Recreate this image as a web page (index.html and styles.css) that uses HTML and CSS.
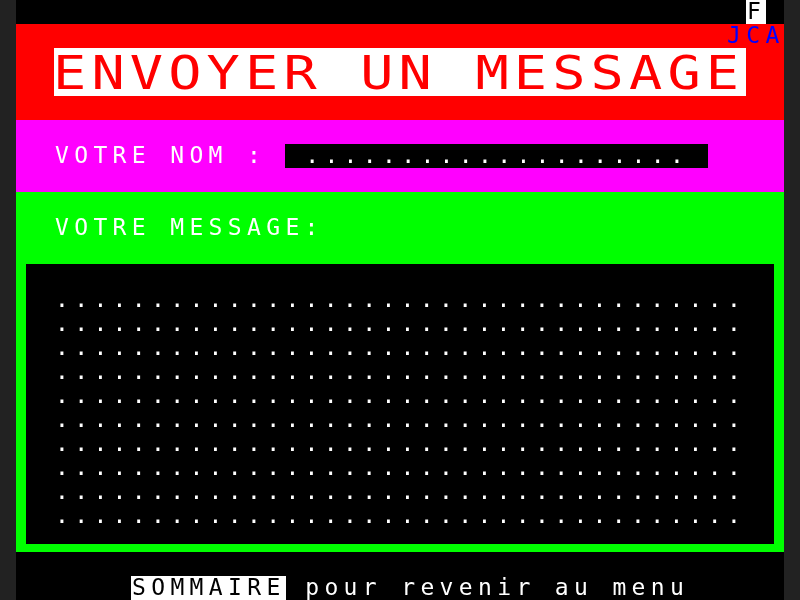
FILE: index.html
```html
<!DOCTYPE html>
<html lang="fr">
<head>
<meta charset="utf-8">
<title>Envoyer un message</title>
<link rel="stylesheet" href="styles.css">
</head>
<body>
<div class="screen">
  <div class="row status"><span class="t inv">F</span></div>
  <div class="band header">
    <div class="row right"><span class="t blue">JCA</span></div>
    <div class="title"><span class="title-text">ENVOYER UN MESSAGE</span></div>
  </div>
  <div class="band name">
    <div class="row indent"><span class="t">VOTRE NOM : </span><span class="t field"> .................... </span></div>
  </div>
  <div class="band msg">
    <div class="row indent"><span class="t">VOTRE MESSAGE:</span></div>
    <div class="box">
      <div class="row"><span class="t">....................................</span></div>
      <div class="row"><span class="t">....................................</span></div>
      <div class="row"><span class="t">....................................</span></div>
      <div class="row"><span class="t">....................................</span></div>
      <div class="row"><span class="t">....................................</span></div>
      <div class="row"><span class="t">....................................</span></div>
      <div class="row"><span class="t">....................................</span></div>
      <div class="row"><span class="t">....................................</span></div>
      <div class="row"><span class="t">....................................</span></div>
      <div class="row"><span class="t">....................................</span></div>
    </div>
  </div>
  <div class="footer">
    <div class="row"></div>
    <div class="row menu"><span class="t inv">SOMMAIRE</span><span class="t"> pour revenir au menu</span></div>
  </div>
</div>
</body>
</html>
```
FILE: styles.css
```css
html, body {
  margin: 0;
  padding: 0;
  height: 100%;
}
body {
  background: #222222;
  overflow: hidden;
}
.screen {
  width: 768px;
  height: 600px;
  margin: 0 auto;
  background: #000000;
  color: #ffffff;
  font-family: "DejaVu Sans Mono", "Liberation Mono", monospace;
  font-size: 23px;
  line-height: 22px;
  letter-spacing: 5.353px;
  -webkit-font-smoothing: antialiased;
}
.row {
  height: 24px;
  display: flex;
}
.t {
  white-space: pre;
  padding-left: 1px;
  margin-right: -1px;
  will-change: transform;
}
.inv {
  background: #ffffff;
  color: #000000;
}
.status {
  justify-content: flex-end;
  padding-right: 19.2px;
}
.right {
  justify-content: flex-end;
}
.blue {
  color: #0000ff;
}
.band {
  box-sizing: border-box;
}
.header {
  height: 96px;
  background: #ff0000;
}
.title {
  margin-left: 38.4px;
  width: 691.2px;
  height: 48px;
  background: #ffffff;
  color: #ff0000;
  font-size: 46px;
  line-height: 50px;
  white-space: pre;
}
.title-text {
  display: inline-block;
  letter-spacing: 4.306px;
  transform: scaleX(1.2);
  transform-origin: 0 0;
  margin-left: -1px;
}
.name {
  height: 72px;
  padding-top: 24px;
  background: #ff00ff;
}
.indent {
  padding-left: 38.4px;
}
.field {
  background: #000000;
}
.msg {
  height: 360px;
  padding-top: 24px;
  background: #00ff00;
}
.box {
  margin: 24px 9.6px 0;
  height: 280px;
  box-sizing: border-box;
  padding: 24px 0 0 28.8px;
  background: #000000;
}
.footer {
  height: 48px;
}
.menu {
  padding-left: 115.2px;
}
```
